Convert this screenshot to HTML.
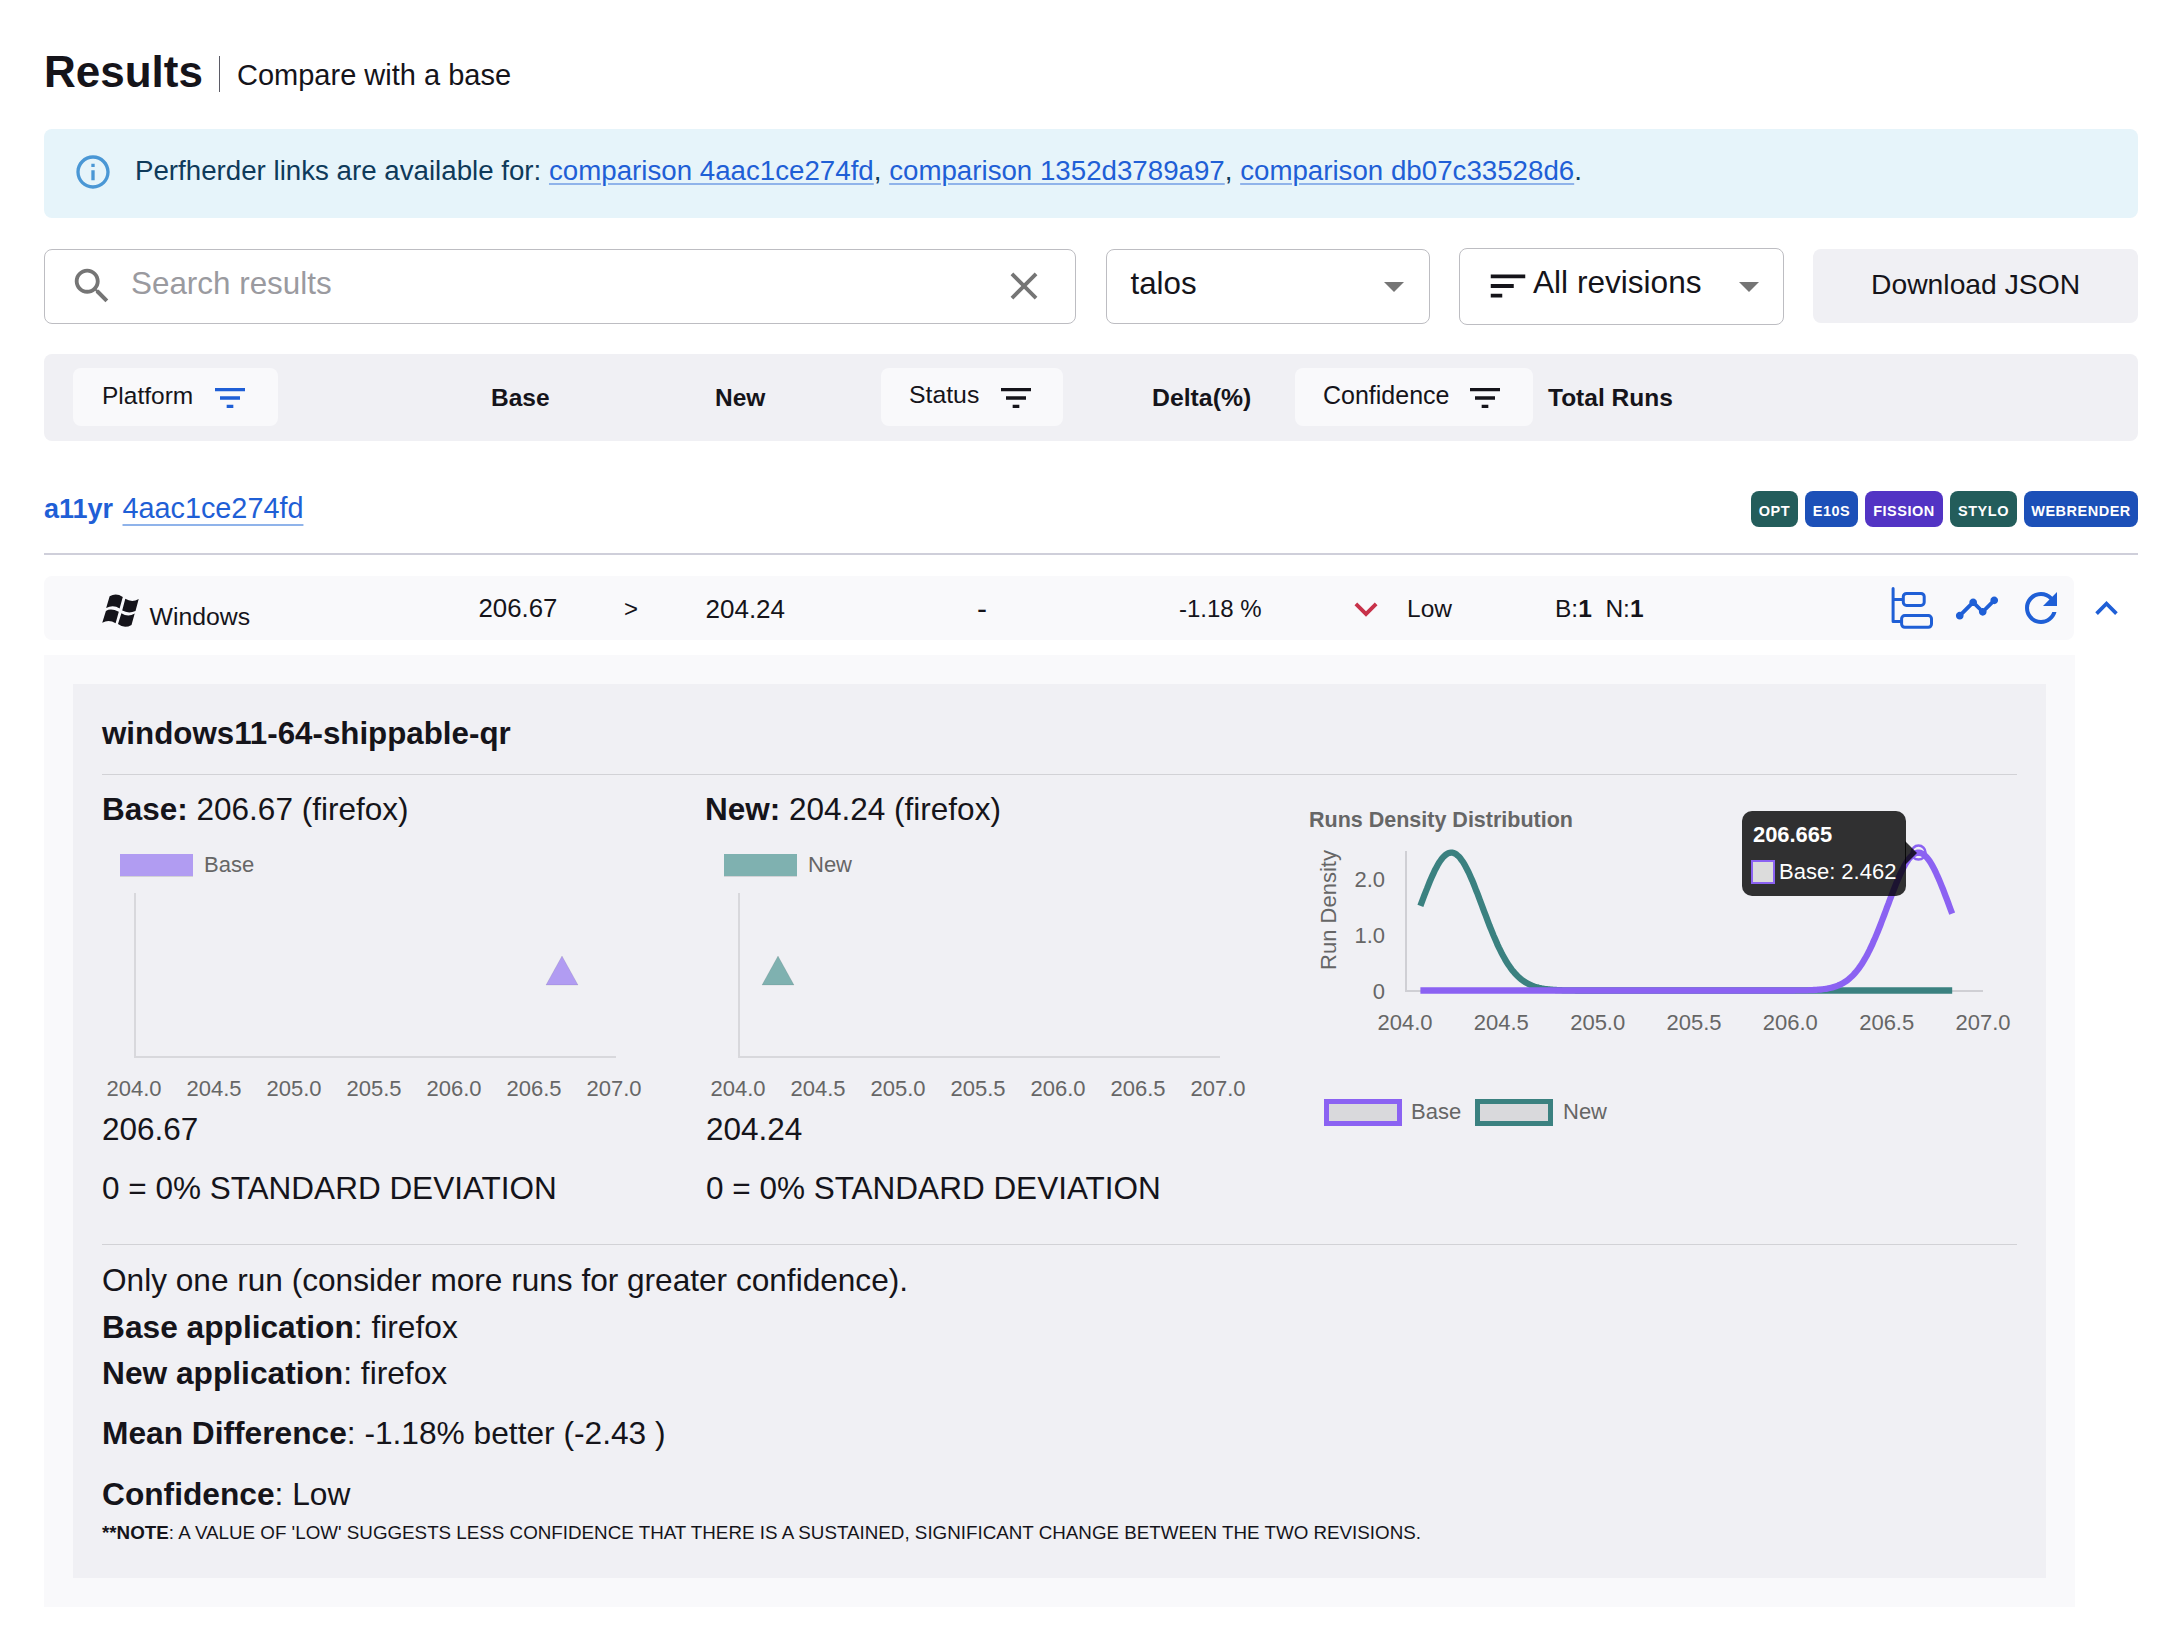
<!DOCTYPE html>
<html><head><meta charset="utf-8"><style>
html,body{margin:0;padding:0;background:#fff;}
body{width:2162px;height:1634px;position:relative;overflow:hidden;font-family:"Liberation Sans", sans-serif;}
.t{position:absolute;white-space:pre;line-height:1;}
.r{position:absolute;}
.badge{color:#fff;font-weight:bold;font-size:14.5px;line-height:40px;text-align:center;border-radius:8px;letter-spacing:0.5px;}
</style></head><body>
<div class="t" style="left:44.0px;top:50.1px;font-size:44px;font-weight:bold;color:#15141a;">Results</div>
<div class="r" style="left:219px;top:56px;width:1px;height:36px;background:#5b5b66;"></div>
<div class="t" style="left:237.0px;top:60.6px;font-size:29px;font-weight:normal;color:#15141a;">Compare with a base</div>
<div class="r" style="left:44px;top:129px;width:2094px;height:89px;background:#e6f4fa;border-radius:8px;"></div>
<svg class="r" style="left:73px;top:152px;" width="40" height="40" viewBox="0 0 24 24"><path fill="#4a97d5" d="M11 7h2v2h-2zm0 4h2v6h-2zm1-9C6.48 2 2 6.48 2 12s4.48 10 10 10 10-4.48 10-10S17.52 2 12 2zm0 18c-4.41 0-8-3.59-8-8s3.59-8 8-8 8 3.59 8 8-3.59 8-8 8z"/></svg>
<div class="t" style="left:135.0px;top:157.0px;font-size:27.7px;font-weight:normal;color:#0e3a5a;">Perfherder links are available for: <span style="color:#1f5fd6;text-decoration:underline;text-decoration-color:#8fb3ea;text-underline-offset:3px;text-decoration-thickness:1.5px">comparison 4aac1ce274fd</span>, <span style="color:#1f5fd6;text-decoration:underline;text-decoration-color:#8fb3ea;text-underline-offset:3px;text-decoration-thickness:1.5px">comparison 1352d3789a97</span>, <span style="color:#1f5fd6;text-decoration:underline;text-decoration-color:#8fb3ea;text-underline-offset:3px;text-decoration-thickness:1.5px">comparison db07c33528d6</span>.</div>
<div class="r" style="left:44px;top:249px;width:1032px;height:75px;background:#fff;border:1.5px solid #bdbdc2;border-radius:8px;box-sizing:border-box;"></div>
<svg class="r" style="left:69px;top:263px;" width="46" height="46" viewBox="0 0 24 24"><path fill="#757575" d="M15.5 14h-.79l-.28-.27C15.41 12.59 16 11.11 16 9.5 16 5.91 13.09 3 9.5 3S3 5.91 3 9.5 5.91 16 9.5 16c1.61 0 3.09-.59 4.23-1.57l.27.28v.79l5 4.99L20.49 19l-4.99-5zm-6 0C7.01 14 5 11.99 5 9.5S7.01 5 9.5 5 14 7.01 14 9.5 11.99 14 9.5 14z"/></svg>
<div class="t" style="left:131.0px;top:267.5px;font-size:31.4px;font-weight:normal;color:#9a9a9f;">Search results</div>
<svg class="r" style="left:1001px;top:263px;" width="46" height="46" viewBox="0 0 24 24"><path fill="#757575" d="M19 6.41 17.59 5 12 10.59 6.41 5 5 6.41 10.59 12 5 17.59 6.41 19 12 13.41 17.59 19 19 17.59 13.41 12z"/></svg>
<div class="r" style="left:1106px;top:249px;width:324px;height:75px;background:#fff;border:1.5px solid #bdbdc2;border-radius:8px;box-sizing:border-box;"></div>
<div class="t" style="left:1130.5px;top:267.6px;font-size:31.3px;font-weight:normal;color:#15141a;">talos</div>
<svg class="r" style="left:1384px;top:282px;" width="20" height="10" viewBox="0 0 20 10"><path fill="#757575" d="M0 0h20L10 10z"/></svg>
<div class="r" style="left:1459px;top:248px;width:325px;height:77px;background:#fff;border:1.5px solid #bdbdc2;border-radius:8px;box-sizing:border-box;"></div>
<svg class="r" style="left:1485px;top:263px;" width="46" height="46" viewBox="0 0 24 24"><path fill="#15141a" d="M3 18h6v-2H3v2zM3 6v2h18V6H3zm0 7h12v-2H3v2z"/></svg>
<div class="t" style="left:1533.0px;top:266.5px;font-size:31.6px;font-weight:normal;color:#15141a;">All revisions</div>
<svg class="r" style="left:1739px;top:282px;" width="20" height="10" viewBox="0 0 20 10"><path fill="#757575" d="M0 0h20L10 10z"/></svg>
<div class="r" style="left:1813px;top:249px;width:325px;height:74px;background:#f0f0f4;border-radius:8px;"></div>
<div class="t" style="left:1871.0px;top:269.7px;font-size:28.3px;font-weight:normal;color:#15141a;">Download JSON</div>
<div class="r" style="left:44px;top:354px;width:2094px;height:87px;background:#f0f0f4;border-radius:8px;"></div>
<div class="r" style="left:73px;top:368px;width:205px;height:58px;background:#f9f9fb;border-radius:8px;"></div>
<div class="t" style="left:102.0px;top:383.7px;font-size:24.5px;font-weight:normal;color:#15141a;">Platform</div>
<svg class="r" style="left:210px;top:378px;" width="40" height="40" viewBox="0 0 24 24"><path fill="#1f5fd6" d="M10 18h4v-2h-4v2zM3 6v2h18V6H3zm3 7h12v-2H6v2z"/></svg>
<div class="t" style="left:491.0px;top:385.9px;font-size:24.5px;font-weight:bold;color:#15141a;">Base</div>
<div class="t" style="left:715.0px;top:385.9px;font-size:24.5px;font-weight:bold;color:#15141a;">New</div>
<div class="r" style="left:881px;top:368px;width:182px;height:58px;background:#f9f9fb;border-radius:8px;"></div>
<div class="t" style="left:909.0px;top:383.4px;font-size:24.8px;font-weight:normal;color:#15141a;">Status</div>
<svg class="r" style="left:996px;top:378px;" width="40" height="40" viewBox="0 0 24 24"><path fill="#15141a" d="M10 18h4v-2h-4v2zM3 6v2h18V6H3zm3 7h12v-2H6v2z"/></svg>
<div class="t" style="left:1152.0px;top:385.6px;font-size:24.8px;font-weight:bold;color:#15141a;">Delta(%)</div>
<div class="r" style="left:1295px;top:368px;width:238px;height:58px;background:#f9f9fb;border-radius:8px;"></div>
<div class="t" style="left:1323.0px;top:383.3px;font-size:25px;font-weight:normal;color:#15141a;">Confidence</div>
<svg class="r" style="left:1465px;top:378px;" width="40" height="40" viewBox="0 0 24 24"><path fill="#15141a" d="M10 18h4v-2h-4v2zM3 6v2h18V6H3zm3 7h12v-2H6v2z"/></svg>
<div class="t" style="left:1548.0px;top:385.9px;font-size:24.5px;font-weight:bold;color:#15141a;">Total Runs</div>
<div class="t" style="left:44.0px;top:495.5px;font-size:27px;font-weight:bold;color:#1f5fd6;">a11yr</div>
<div class="t" style="left:122.5px;top:494.0px;font-size:28.8px;font-weight:normal;color:#1f5fd6;"><span style="text-decoration:underline;text-decoration-color:#8fb3ea;text-underline-offset:6px;text-decoration-thickness:2px">4aac1ce274fd</span></div>
<div class="r badge" style="left:1751px;top:491px;width:47px;height:36px;background:#235d5b;">OPT</div>
<div class="r badge" style="left:1805px;top:491px;width:53px;height:36px;background:#1c50b8;">E10S</div>
<div class="r badge" style="left:1865px;top:491px;width:78px;height:36px;background:#5234c4;">FISSION</div>
<div class="r badge" style="left:1950px;top:491px;width:67px;height:36px;background:#235d5b;">STYLO</div>
<div class="r badge" style="left:2024px;top:491px;width:114px;height:36px;background:#1c50b8;">WEBRENDER</div>
<div class="r" style="left:44px;top:553px;width:2094px;height:1.5px;background:#cfcfda;"></div>
<div class="r" style="left:44px;top:576px;width:2030px;height:64px;background:#f9f9fb;border-radius:8px;"></div>
<svg class="r" style="left:97px;top:588px;" width="48" height="44" viewBox="0 0 48 44"><path fill="#15141a" d="M12.65 8.34 Q19 4.58 25.8 8.9 L22.6 20.5 Q16.5 16.4 9.15 19.9 Z M28.3 10.8 Q35 14.9 41.7 11 L38.5 23.1 Q31.5 25.95 25.2 22.6 Z M8.9 22.9 Q14 19.7 21.8 23.7 L18.6 35.3 Q12 31.2 5.25 34.7 Z M24.4 25.2 Q31 29.6 37.7 25.6 L34.5 36.9 Q27.5 41.1 21 36.1 Z"/></svg>
<div class="t" style="left:149.5px;top:605.0px;font-size:24.8px;font-weight:normal;color:#15141a;">Windows</div>
<div class="t" style="left:478.5px;top:595.7px;font-size:25.8px;font-weight:normal;color:#15141a;">206.67</div>
<div class="t" style="left:624.0px;top:597.2px;font-size:24px;font-weight:normal;color:#15141a;">&gt;</div>
<div class="t" style="left:705.5px;top:595.5px;font-size:26px;font-weight:normal;color:#15141a;">204.24</div>
<div class="t" style="left:977.0px;top:593.6px;font-size:30px;font-weight:normal;color:#15141a;">-</div>
<div class="t" style="left:1179.0px;top:597.2px;font-size:24px;font-weight:normal;color:#15141a;">-1.18 %</div>
<svg class="r" style="left:1343.3px;top:585.5px;" width="46" height="46" viewBox="0 0 24 24"><path fill="#c8324a" d="M16.59 8.59 12 13.17 7.41 8.59 6 10l6 6 6-6z"/></svg>
<div class="t" style="left:1407.0px;top:596.8px;font-size:24.5px;font-weight:normal;color:#15141a;">Low</div>
<div class="t" style="left:1555.0px;top:596.8px;font-size:24.5px;font-weight:normal;color:#15141a;">B:<b>1</b>&nbsp;&nbsp;N:<b>1</b></div>
<svg class="r" style="left:1885px;top:580px;" width="55" height="55" viewBox="0 0 55 55"><g fill="none" stroke="#1f5fd6" stroke-width="3" stroke-linecap="round" stroke-linejoin="round"><path d="M8.1 8.5 V41.4 H15.6 M8.1 19.4 H16.8"/><rect x="18.3" y="13.4" width="20.9" height="12" rx="3.2"/><rect x="16.6" y="35.5" width="29.9" height="11.8" rx="3.2"/></g></svg>
<svg class="r" style="left:1954px;top:585.2px;" width="46" height="46" viewBox="0 0 24 24"><path fill="#1f5fd6" d="M23 8c0 1.1-.9 2-2 2-.18 0-.35-.02-.51-.07l-3.56 3.55c.05.16.07.34.07.52 0 1.1-.9 2-2 2s-2-.9-2-2c0-.18.02-.36.07-.52l-2.55-2.55c-.16.05-.34.07-.52.07s-.36-.02-.52-.07l-4.55 4.56c.05.16.07.33.07.51 0 1.1-.9 2-2 2s-2-.9-2-2 .9-2 2-2c.18 0 .35.02.51.07l4.56-4.55C8.02 9.36 8 9.18 8 9c0-1.1.9-2 2-2s2 .9 2 2c0 .18-.02.36-.07.52l2.55 2.55c.16-.05.34-.07.52-.07s.36.02.52.07l3.55-3.56C19.02 8.35 19 8.18 19 8c0-1.1.9-2 2-2s2 .9 2 2z"/></svg>
<svg class="r" style="left:2017px;top:584px;" width="48" height="48" viewBox="0 0 24 24"><path fill="#1f5fd6" d="M17.65 6.35C16.2 4.9 14.21 4 12 4c-4.42 0-7.99 3.58-7.99 8s3.57 8 7.99 8c3.73 0 6.84-2.55 7.73-6h-2.08c-.82 2.33-3.04 4-5.65 4-3.31 0-6-2.69-6-6s2.69-6 6-6c1.66 0 3.14.69 4.22 1.78L13 11h7V4l-2.35 2.35z"/></svg>
<svg class="r" style="left:2083.7px;top:585.8px;" width="45" height="45" viewBox="0 0 24 24"><path fill="#1f5fd6" d="M12 8l-6 6 1.41 1.41L12 10.83l4.59 4.58L18 14z"/></svg>
<div class="r" style="left:44px;top:655px;width:2031px;height:952px;background:#f9f9fb;"></div>
<div class="r" style="left:73px;top:684px;width:1973px;height:894px;background:#f0f0f4;"></div>
<div class="t" style="left:102.0px;top:717.8px;font-size:31.3px;font-weight:bold;color:#15141a;">windows11-64-shippable-qr</div>
<div class="r" style="left:102px;top:774px;width:1915px;height:1.2999999999999545px;background:#d2d2d6;"></div>
<div class="t" style="left:102.0px;top:794.1px;font-size:31.5px;font-weight:normal;color:#15141a;"><b>Base:</b> 206.67 (firefox)</div>
<div class="r" style="left:120px;top:854px;width:73px;height:22px;background:#b19cf2;box-shadow:0 1px 0 rgba(0,0,0,0.12);"></div>
<div class="t" style="left:204.0px;top:853.6px;font-size:22px;font-weight:normal;color:#666666;">Base</div>
<div class="r" style="left:134px;top:893px;width:2px;height:165px;background:#d8d8dc;"></div>
<div class="r" style="left:134px;top:1056px;width:482px;height:2px;background:#d8d8dc;"></div>
<svg class="r" style="left:544.5px;top:955px;" width="34" height="31" viewBox="0 0 34 31"><path fill="#b19cf2" stroke="rgba(0,0,0,0.08)" stroke-width="1" d="M17 1 L33 30 L1 30 Z"/></svg>
<div class="t" style="left:94px;top:1078.4px;width:80px;text-align:center;font-size:22px;color:#666666">204.0</div>
<div class="t" style="left:174px;top:1078.4px;width:80px;text-align:center;font-size:22px;color:#666666">204.5</div>
<div class="t" style="left:254px;top:1078.4px;width:80px;text-align:center;font-size:22px;color:#666666">205.0</div>
<div class="t" style="left:334px;top:1078.4px;width:80px;text-align:center;font-size:22px;color:#666666">205.5</div>
<div class="t" style="left:414px;top:1078.4px;width:80px;text-align:center;font-size:22px;color:#666666">206.0</div>
<div class="t" style="left:494px;top:1078.4px;width:80px;text-align:center;font-size:22px;color:#666666">206.5</div>
<div class="t" style="left:574px;top:1078.4px;width:80px;text-align:center;font-size:22px;color:#666666">207.0</div>
<div class="t" style="left:102.0px;top:1113.6px;font-size:31.5px;font-weight:normal;color:#15141a;">206.67</div>
<div class="t" style="left:102.0px;top:1173.2px;font-size:31.5px;font-weight:normal;color:#15141a;">0 = 0% STANDARD DEVIATION</div>
<div class="t" style="left:705.0px;top:794.1px;font-size:31.5px;font-weight:normal;color:#15141a;"><b>New:</b> 204.24 (firefox)</div>
<div class="r" style="left:724px;top:854px;width:73px;height:22px;background:#7fb1b0;box-shadow:0 1px 0 rgba(0,0,0,0.12);"></div>
<div class="t" style="left:808.0px;top:853.6px;font-size:22px;font-weight:normal;color:#666666;">New</div>
<div class="r" style="left:738px;top:893px;width:2px;height:165px;background:#d8d8dc;"></div>
<div class="r" style="left:738px;top:1056px;width:482px;height:2px;background:#d8d8dc;"></div>
<svg class="r" style="left:760.5px;top:955px;" width="34" height="31" viewBox="0 0 34 31"><path fill="#7fb1b0" stroke="rgba(0,0,0,0.08)" stroke-width="1" d="M17 1 L33 30 L1 30 Z"/></svg>
<div class="t" style="left:698px;top:1078.4px;width:80px;text-align:center;font-size:22px;color:#666666">204.0</div>
<div class="t" style="left:778px;top:1078.4px;width:80px;text-align:center;font-size:22px;color:#666666">204.5</div>
<div class="t" style="left:858px;top:1078.4px;width:80px;text-align:center;font-size:22px;color:#666666">205.0</div>
<div class="t" style="left:938px;top:1078.4px;width:80px;text-align:center;font-size:22px;color:#666666">205.5</div>
<div class="t" style="left:1018px;top:1078.4px;width:80px;text-align:center;font-size:22px;color:#666666">206.0</div>
<div class="t" style="left:1098px;top:1078.4px;width:80px;text-align:center;font-size:22px;color:#666666">206.5</div>
<div class="t" style="left:1178px;top:1078.4px;width:80px;text-align:center;font-size:22px;color:#666666">207.0</div>
<div class="t" style="left:706.0px;top:1113.6px;font-size:31.5px;font-weight:normal;color:#15141a;">204.24</div>
<div class="t" style="left:706.0px;top:1173.2px;font-size:31.5px;font-weight:normal;color:#15141a;">0 = 0% STANDARD DEVIATION</div>
<div class="t" style="left:1309.0px;top:809.8px;font-size:21.5px;font-weight:bold;color:#666666;">Runs Density Distribution</div>
<div class="t" style="left:1269px;top:899px;width:120px;height:22px;text-align:center;font-size:22px;color:#666666;transform:rotate(-90deg);transform-origin:60px 11px;">Run Density</div>
<div class="t" style="left:1285px;top:868.7px;width:100px;text-align:right;font-size:22px;color:#666666">2.0</div>
<div class="t" style="left:1285px;top:924.7px;width:100px;text-align:right;font-size:22px;color:#666666">1.0</div>
<div class="t" style="left:1285px;top:980.7px;width:100px;text-align:right;font-size:22px;color:#666666">0</div>
<div class="r" style="left:1405px;top:851px;width:1.5px;height:140.5px;background:#cfcfd4;"></div>
<div class="r" style="left:1405px;top:990px;width:578px;height:1.5px;background:#cfcfd4;"></div>
<div class="t" style="left:1355.0px;top:1012.2px;width:100px;text-align:center;font-size:22px;color:#666666">204.0</div>
<div class="t" style="left:1451.3px;top:1012.2px;width:100px;text-align:center;font-size:22px;color:#666666">204.5</div>
<div class="t" style="left:1547.7px;top:1012.2px;width:100px;text-align:center;font-size:22px;color:#666666">205.0</div>
<div class="t" style="left:1644.0px;top:1012.2px;width:100px;text-align:center;font-size:22px;color:#666666">205.5</div>
<div class="t" style="left:1740.3px;top:1012.2px;width:100px;text-align:center;font-size:22px;color:#666666">206.0</div>
<div class="t" style="left:1836.7px;top:1012.2px;width:100px;text-align:center;font-size:22px;color:#666666">206.5</div>
<div class="t" style="left:1933.0px;top:1012.2px;width:100px;text-align:center;font-size:22px;color:#666666">207.0</div>
<svg class="r" style="left:0px;top:0px;pointer-events:none;" width="2162" height="1634" viewBox="0 0 2162 1634"><polyline fill="none" stroke="#3b8180" stroke-width="6.3" points="1420.4,905.8 1421.7,902.3 1423.1,898.7 1424.4,895.2 1425.7,891.8 1427.1,888.4 1428.4,885.0 1429.7,881.8 1431.0,878.7 1432.4,875.6 1433.7,872.8 1435.0,870.0 1436.4,867.4 1437.7,865.0 1439.0,862.8 1440.4,860.8 1441.7,858.9 1443.0,857.3 1444.3,856.0 1445.7,854.8 1447.0,853.9 1448.3,853.2 1449.7,852.8 1451.0,852.6 1452.3,852.7 1453.6,853.0 1455.0,853.6 1456.3,854.4 1457.6,855.5 1459.0,856.8 1460.3,858.3 1461.6,860.1 1463.0,862.0 1464.3,864.2 1465.6,866.5 1466.9,869.0 1468.3,871.7 1469.6,874.5 1470.9,877.5 1472.3,880.6 1473.6,883.8 1474.9,887.1 1476.2,890.5 1477.6,893.9 1478.9,897.4 1480.2,901.0 1481.6,904.5 1482.9,908.1 1484.2,911.6 1485.6,915.2 1486.9,918.7 1488.2,922.1 1489.5,925.6 1490.9,928.9 1492.2,932.2 1493.5,935.4 1494.9,938.6 1496.2,941.6 1497.5,944.6 1498.8,947.4 1500.2,950.2 1501.5,952.8 1502.8,955.3 1504.2,957.8 1505.5,960.1 1506.8,962.3 1508.2,964.4 1509.5,966.3 1510.8,968.2 1512.1,970.0 1513.5,971.6 1514.8,973.2 1516.1,974.6 1517.5,976.0 1518.8,977.2 1520.1,978.4 1521.4,979.5 1522.8,980.5 1524.1,981.5 1525.4,982.3 1526.8,983.1 1528.1,983.8 1529.4,984.5 1530.8,985.1 1532.1,985.7 1533.4,986.2 1534.7,986.7 1536.1,987.1 1537.4,987.4 1538.7,987.8 1540.1,988.1 1541.4,988.4 1542.7,988.6 1544.0,988.8 1545.4,989.0 1546.7,989.2 1548.0,989.4 1549.4,989.5 1550.7,989.6 1552.0,989.7 1553.4,989.8 1554.7,989.9 1556.0,990.0 1557.3,990.1 1558.7,990.1 1560.0,990.2 1561.3,990.2 1562.7,990.3 1564.0,990.3 1565.3,990.3 1566.6,990.4 1568.0,990.4 1569.3,990.4 1570.6,990.4 1572.0,990.4 1573.3,990.4 1574.6,990.4 1576.0,990.5 1577.3,990.5 1578.6,990.5 1579.9,990.5 1581.3,990.5 1582.6,990.5 1583.9,990.5 1585.3,990.5 1586.6,990.5 1587.9,990.5 1589.2,990.5 1590.6,990.5 1591.9,990.5 1593.2,990.5 1594.6,990.5 1595.9,990.5 1597.2,990.5 1598.6,990.5 1599.9,990.5 1601.2,990.5 1602.5,990.5 1603.9,990.5 1605.2,990.5 1606.5,990.5 1607.9,990.5 1609.2,990.5 1610.5,990.5 1611.8,990.5 1613.2,990.5 1614.5,990.5 1615.8,990.5 1617.2,990.5 1618.5,990.5 1619.8,990.5 1621.2,990.5 1622.5,990.5 1623.8,990.5 1625.1,990.5 1626.5,990.5 1627.8,990.5 1629.1,990.5 1630.5,990.5 1631.8,990.5 1633.1,990.5 1634.4,990.5 1635.8,990.5 1637.1,990.5 1638.4,990.5 1639.8,990.5 1641.1,990.5 1642.4,990.5 1643.8,990.5 1645.1,990.5 1646.4,990.5 1647.7,990.5 1649.1,990.5 1650.4,990.5 1651.7,990.5 1653.1,990.5 1654.4,990.5 1655.7,990.5 1657.0,990.5 1658.4,990.5 1659.7,990.5 1661.0,990.5 1662.4,990.5 1663.7,990.5 1665.0,990.5 1666.4,990.5 1667.7,990.5 1669.0,990.5 1670.3,990.5 1671.7,990.5 1673.0,990.5 1674.3,990.5 1675.7,990.5 1677.0,990.5 1678.3,990.5 1679.6,990.5 1681.0,990.5 1682.3,990.5 1683.6,990.5 1685.0,990.5 1686.3,990.5 1687.6,990.5 1689.0,990.5 1690.3,990.5 1691.6,990.5 1692.9,990.5 1694.3,990.5 1695.6,990.5 1696.9,990.5 1698.3,990.5 1699.6,990.5 1700.9,990.5 1702.2,990.5 1703.6,990.5 1704.9,990.5 1706.2,990.5 1707.6,990.5 1708.9,990.5 1710.2,990.5 1711.6,990.5 1712.9,990.5 1714.2,990.5 1715.5,990.5 1716.9,990.5 1718.2,990.5 1719.5,990.5 1720.9,990.5 1722.2,990.5 1723.5,990.5 1724.8,990.5 1726.2,990.5 1727.5,990.5 1728.8,990.5 1730.2,990.5 1731.5,990.5 1732.8,990.5 1734.2,990.5 1735.5,990.5 1736.8,990.5 1738.1,990.5 1739.5,990.5 1740.8,990.5 1742.1,990.5 1743.5,990.5 1744.8,990.5 1746.1,990.5 1747.4,990.5 1748.8,990.5 1750.1,990.5 1751.4,990.5 1752.8,990.5 1754.1,990.5 1755.4,990.5 1756.8,990.5 1758.1,990.5 1759.4,990.5 1760.7,990.5 1762.1,990.5 1763.4,990.5 1764.7,990.5 1766.1,990.5 1767.4,990.5 1768.7,990.5 1770.0,990.5 1771.4,990.5 1772.7,990.5 1774.0,990.5 1775.4,990.5 1776.7,990.5 1778.0,990.5 1779.4,990.5 1780.7,990.5 1782.0,990.5 1783.3,990.5 1784.7,990.5 1786.0,990.5 1787.3,990.5 1788.7,990.5 1790.0,990.5 1791.3,990.5 1792.6,990.5 1794.0,990.5 1795.3,990.5 1796.6,990.5 1798.0,990.5 1799.3,990.5 1800.6,990.5 1802.0,990.5 1803.3,990.5 1804.6,990.5 1805.9,990.5 1807.3,990.5 1808.6,990.5 1809.9,990.5 1811.3,990.5 1812.6,990.5 1813.9,990.5 1815.2,990.5 1816.6,990.5 1817.9,990.5 1819.2,990.5 1820.6,990.5 1821.9,990.5 1823.2,990.5 1824.6,990.5 1825.9,990.5 1827.2,990.5 1828.5,990.5 1829.9,990.5 1831.2,990.5 1832.5,990.5 1833.9,990.5 1835.2,990.5 1836.5,990.5 1837.8,990.5 1839.2,990.5 1840.5,990.5 1841.8,990.5 1843.2,990.5 1844.5,990.5 1845.8,990.5 1847.2,990.5 1848.5,990.5 1849.8,990.5 1851.1,990.5 1852.5,990.5 1853.8,990.5 1855.1,990.5 1856.5,990.5 1857.8,990.5 1859.1,990.5 1860.4,990.5 1861.8,990.5 1863.1,990.5 1864.4,990.5 1865.8,990.5 1867.1,990.5 1868.4,990.5 1869.8,990.5 1871.1,990.5 1872.4,990.5 1873.7,990.5 1875.1,990.5 1876.4,990.5 1877.7,990.5 1879.1,990.5 1880.4,990.5 1881.7,990.5 1883.0,990.5 1884.4,990.5 1885.7,990.5 1887.0,990.5 1888.4,990.5 1889.7,990.5 1891.0,990.5 1892.4,990.5 1893.7,990.5 1895.0,990.5 1896.3,990.5 1897.7,990.5 1899.0,990.5 1900.3,990.5 1901.7,990.5 1903.0,990.5 1904.3,990.5 1905.6,990.5 1907.0,990.5 1908.3,990.5 1909.6,990.5 1911.0,990.5 1912.3,990.5 1913.6,990.5 1915.0,990.5 1916.3,990.5 1917.6,990.5 1918.9,990.5 1920.3,990.5 1921.6,990.5 1922.9,990.5 1924.3,990.5 1925.6,990.5 1926.9,990.5 1928.2,990.5 1929.6,990.5 1930.9,990.5 1932.2,990.5 1933.6,990.5 1934.9,990.5 1936.2,990.5 1937.5,990.5 1938.9,990.5 1940.2,990.5 1941.5,990.5 1942.9,990.5 1944.2,990.5 1945.5,990.5 1946.9,990.5 1948.2,990.5 1949.5,990.5 1950.8,990.5 1952.2,990.5"/><polyline fill="none" stroke="#8b62f2" stroke-width="6.3" points="1420.4,990.5 1421.7,990.5 1423.1,990.5 1424.4,990.5 1425.7,990.5 1427.1,990.5 1428.4,990.5 1429.7,990.5 1431.0,990.5 1432.4,990.5 1433.7,990.5 1435.0,990.5 1436.4,990.5 1437.7,990.5 1439.0,990.5 1440.4,990.5 1441.7,990.5 1443.0,990.5 1444.3,990.5 1445.7,990.5 1447.0,990.5 1448.3,990.5 1449.7,990.5 1451.0,990.5 1452.3,990.5 1453.6,990.5 1455.0,990.5 1456.3,990.5 1457.6,990.5 1459.0,990.5 1460.3,990.5 1461.6,990.5 1463.0,990.5 1464.3,990.5 1465.6,990.5 1466.9,990.5 1468.3,990.5 1469.6,990.5 1470.9,990.5 1472.3,990.5 1473.6,990.5 1474.9,990.5 1476.2,990.5 1477.6,990.5 1478.9,990.5 1480.2,990.5 1481.6,990.5 1482.9,990.5 1484.2,990.5 1485.6,990.5 1486.9,990.5 1488.2,990.5 1489.5,990.5 1490.9,990.5 1492.2,990.5 1493.5,990.5 1494.9,990.5 1496.2,990.5 1497.5,990.5 1498.8,990.5 1500.2,990.5 1501.5,990.5 1502.8,990.5 1504.2,990.5 1505.5,990.5 1506.8,990.5 1508.2,990.5 1509.5,990.5 1510.8,990.5 1512.1,990.5 1513.5,990.5 1514.8,990.5 1516.1,990.5 1517.5,990.5 1518.8,990.5 1520.1,990.5 1521.4,990.5 1522.8,990.5 1524.1,990.5 1525.4,990.5 1526.8,990.5 1528.1,990.5 1529.4,990.5 1530.8,990.5 1532.1,990.5 1533.4,990.5 1534.7,990.5 1536.1,990.5 1537.4,990.5 1538.7,990.5 1540.1,990.5 1541.4,990.5 1542.7,990.5 1544.0,990.5 1545.4,990.5 1546.7,990.5 1548.0,990.5 1549.4,990.5 1550.7,990.5 1552.0,990.5 1553.4,990.5 1554.7,990.5 1556.0,990.5 1557.3,990.5 1558.7,990.5 1560.0,990.5 1561.3,990.5 1562.7,990.5 1564.0,990.5 1565.3,990.5 1566.6,990.5 1568.0,990.5 1569.3,990.5 1570.6,990.5 1572.0,990.5 1573.3,990.5 1574.6,990.5 1576.0,990.5 1577.3,990.5 1578.6,990.5 1579.9,990.5 1581.3,990.5 1582.6,990.5 1583.9,990.5 1585.3,990.5 1586.6,990.5 1587.9,990.5 1589.2,990.5 1590.6,990.5 1591.9,990.5 1593.2,990.5 1594.6,990.5 1595.9,990.5 1597.2,990.5 1598.6,990.5 1599.9,990.5 1601.2,990.5 1602.5,990.5 1603.9,990.5 1605.2,990.5 1606.5,990.5 1607.9,990.5 1609.2,990.5 1610.5,990.5 1611.8,990.5 1613.2,990.5 1614.5,990.5 1615.8,990.5 1617.2,990.5 1618.5,990.5 1619.8,990.5 1621.2,990.5 1622.5,990.5 1623.8,990.5 1625.1,990.5 1626.5,990.5 1627.8,990.5 1629.1,990.5 1630.5,990.5 1631.8,990.5 1633.1,990.5 1634.4,990.5 1635.8,990.5 1637.1,990.5 1638.4,990.5 1639.8,990.5 1641.1,990.5 1642.4,990.5 1643.8,990.5 1645.1,990.5 1646.4,990.5 1647.7,990.5 1649.1,990.5 1650.4,990.5 1651.7,990.5 1653.1,990.5 1654.4,990.5 1655.7,990.5 1657.0,990.5 1658.4,990.5 1659.7,990.5 1661.0,990.5 1662.4,990.5 1663.7,990.5 1665.0,990.5 1666.4,990.5 1667.7,990.5 1669.0,990.5 1670.3,990.5 1671.7,990.5 1673.0,990.5 1674.3,990.5 1675.7,990.5 1677.0,990.5 1678.3,990.5 1679.6,990.5 1681.0,990.5 1682.3,990.5 1683.6,990.5 1685.0,990.5 1686.3,990.5 1687.6,990.5 1689.0,990.5 1690.3,990.5 1691.6,990.5 1692.9,990.5 1694.3,990.5 1695.6,990.5 1696.9,990.5 1698.3,990.5 1699.6,990.5 1700.9,990.5 1702.2,990.5 1703.6,990.5 1704.9,990.5 1706.2,990.5 1707.6,990.5 1708.9,990.5 1710.2,990.5 1711.6,990.5 1712.9,990.5 1714.2,990.5 1715.5,990.5 1716.9,990.5 1718.2,990.5 1719.5,990.5 1720.9,990.5 1722.2,990.5 1723.5,990.5 1724.8,990.5 1726.2,990.5 1727.5,990.5 1728.8,990.5 1730.2,990.5 1731.5,990.5 1732.8,990.5 1734.2,990.5 1735.5,990.5 1736.8,990.5 1738.1,990.5 1739.5,990.5 1740.8,990.5 1742.1,990.5 1743.5,990.5 1744.8,990.5 1746.1,990.5 1747.4,990.5 1748.8,990.5 1750.1,990.5 1751.4,990.5 1752.8,990.5 1754.1,990.5 1755.4,990.5 1756.8,990.5 1758.1,990.5 1759.4,990.5 1760.7,990.5 1762.1,990.5 1763.4,990.5 1764.7,990.5 1766.1,990.5 1767.4,990.5 1768.7,990.5 1770.0,990.5 1771.4,990.5 1772.7,990.5 1774.0,990.5 1775.4,990.5 1776.7,990.5 1778.0,990.5 1779.4,990.5 1780.7,990.5 1782.0,990.5 1783.3,990.5 1784.7,990.5 1786.0,990.5 1787.3,990.5 1788.7,990.5 1790.0,990.5 1791.3,990.5 1792.6,990.5 1794.0,990.5 1795.3,990.4 1796.6,990.4 1798.0,990.4 1799.3,990.4 1800.6,990.4 1802.0,990.4 1803.3,990.3 1804.6,990.3 1805.9,990.3 1807.3,990.3 1808.6,990.2 1809.9,990.2 1811.3,990.1 1812.6,990.1 1813.9,990.0 1815.2,989.9 1816.6,989.8 1817.9,989.7 1819.2,989.6 1820.6,989.5 1821.9,989.3 1823.2,989.2 1824.6,989.0 1825.9,988.8 1827.2,988.6 1828.5,988.3 1829.9,988.0 1831.2,987.7 1832.5,987.4 1833.9,987.0 1835.2,986.6 1836.5,986.1 1837.8,985.6 1839.2,985.0 1840.5,984.4 1841.8,983.7 1843.2,983.0 1844.5,982.2 1845.8,981.3 1847.2,980.4 1848.5,979.3 1849.8,978.2 1851.1,977.0 1852.5,975.7 1853.8,974.4 1855.1,972.9 1856.5,971.3 1857.8,969.7 1859.1,967.9 1860.4,966.0 1861.8,964.0 1863.1,961.9 1864.4,959.7 1865.8,957.3 1867.1,954.9 1868.4,952.4 1869.8,949.7 1871.1,946.9 1872.4,944.1 1873.7,941.1 1875.1,938.0 1876.4,934.9 1877.7,931.7 1879.1,928.3 1880.4,925.0 1881.7,921.5 1883.0,918.1 1884.4,914.5 1885.7,911.0 1887.0,907.4 1888.4,903.9 1889.7,900.3 1891.0,896.8 1892.4,893.3 1893.7,889.9 1895.0,886.5 1896.3,883.2 1897.7,880.1 1899.0,877.0 1900.3,874.0 1901.7,871.2 1903.0,868.6 1904.3,866.1 1905.6,863.8 1907.0,861.6 1908.3,859.7 1909.6,858.0 1911.0,856.5 1912.3,855.3 1913.6,854.3 1915.0,853.5 1916.3,853.0 1917.6,852.7 1918.9,852.6 1920.3,852.9 1921.6,853.3 1922.9,854.0 1924.3,855.0 1925.6,856.2 1926.9,857.6 1928.2,859.2 1929.6,861.1 1930.9,863.2 1932.2,865.4 1933.6,867.9 1934.9,870.5 1936.2,873.2 1937.5,876.2 1938.9,879.2 1940.2,882.4 1941.5,885.6 1942.9,889.0 1944.2,892.4 1945.5,895.8 1946.9,899.4 1948.2,902.9 1949.5,906.5 1950.8,910.0 1952.2,913.6"/><circle cx="1918.5" cy="852.6" r="7" fill="none" stroke="#8b62f2" stroke-width="2.5"/></svg>
<div class="r" style="left:1742px;top:811px;width:164px;height:85px;background:rgba(0,0,0,0.8);border-radius:10px;"></div>
<svg class="r" style="left:1905px;top:841px;" width="12" height="24" viewBox="0 0 12 24"><path fill="rgba(0,0,0,0.8)" d="M0 0 L12 12 L0 24 Z"/></svg>
<div class="t" style="left:1753.0px;top:824.0px;font-size:21.9px;font-weight:bold;color:#fff;">206.665</div>
<div class="r" style="left:1751px;top:860px;width:24px;height:24px;background:#dcdcdc;border:2.5px solid #8b62f2;box-sizing:border-box;"></div>
<div class="t" style="left:1779.0px;top:861.0px;font-size:22px;font-weight:normal;color:#fff;">Base: 2.462</div>
<div class="r" style="left:1324px;top:1099px;width:78px;height:27px;background:#d9d9dc;border:5px solid #8b62f2;box-sizing:border-box;"></div>
<div class="t" style="left:1411.0px;top:1100.9px;font-size:22px;font-weight:normal;color:#666666;">Base</div>
<div class="r" style="left:1475px;top:1099px;width:78px;height:27px;background:#d9d9dc;border:5px solid #3b8180;box-sizing:border-box;"></div>
<div class="t" style="left:1563.0px;top:1100.9px;font-size:22px;font-weight:normal;color:#666666;">New</div>
<div class="r" style="left:102px;top:1244px;width:1915px;height:1.2999999999999545px;background:#d2d2d6;"></div>
<div class="t" style="left:102.0px;top:1265.0px;font-size:31.6px;font-weight:normal;color:#15141a;">Only one run (consider more runs for greater confidence).</div>
<div class="t" style="left:102.0px;top:1311.7px;font-size:31.7px;font-weight:normal;color:#15141a;"><b>Base application</b>: firefox</div>
<div class="t" style="left:102.0px;top:1357.6px;font-size:31.7px;font-weight:normal;color:#15141a;"><b>New application</b>: firefox</div>
<div class="t" style="left:102.0px;top:1418.2px;font-size:31.7px;font-weight:normal;color:#15141a;"><b>Mean Difference</b>: -1.18% better (-2.43 )</div>
<div class="t" style="left:102.0px;top:1478.8px;font-size:31.7px;font-weight:normal;color:#15141a;"><b>Confidence</b>: Low</div>
<div class="t" style="left:102.0px;top:1523.5px;font-size:18.8px;font-weight:normal;color:#15141a;"><b>**NOTE</b>: A VALUE OF 'LOW' SUGGESTS LESS CONFIDENCE THAT THERE IS A SUSTAINED, SIGNIFICANT CHANGE BETWEEN THE TWO REVISIONS.</div>
</body></html>
